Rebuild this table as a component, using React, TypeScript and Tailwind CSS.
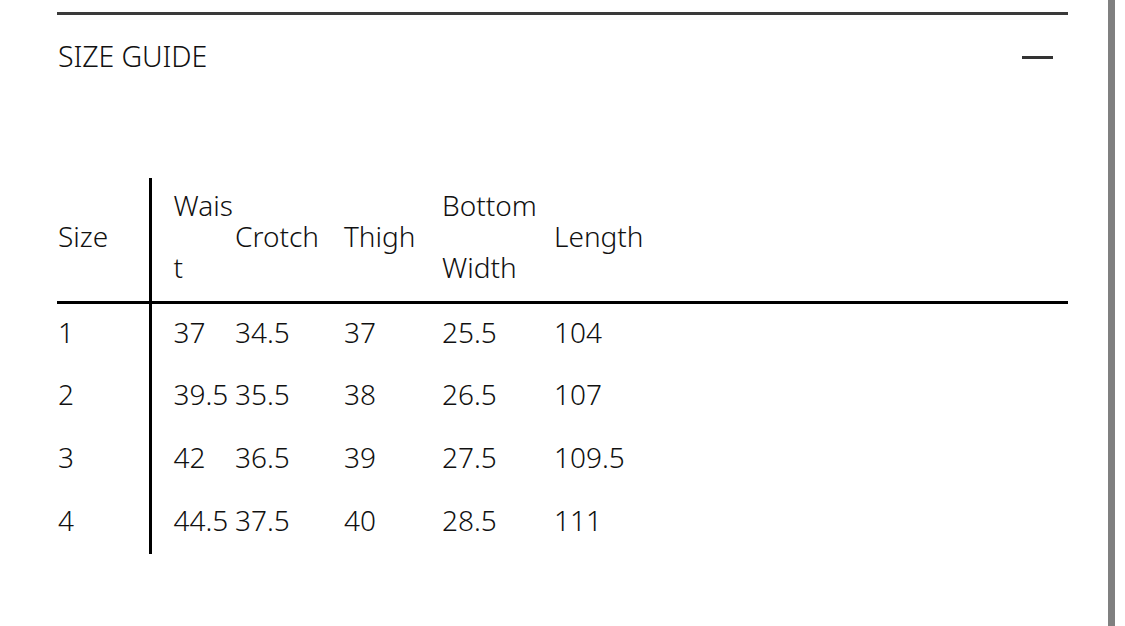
import React from 'react';

interface SizeRow {
  size: string;
  waist: string;
  crotch: string;
  thigh: string;
  bottom: string;
  length: string;
}

const rows: SizeRow[] = [
  { size: '1', waist: '37', crotch: '34.5', thigh: '37', bottom: '25.5', length: '104' },
  { size: '2', waist: '39.5', crotch: '35.5', thigh: '38', bottom: '26.5', length: '107' },
  { size: '3', waist: '42', crotch: '36.5', thigh: '39', bottom: '27.5', length: '109.5' },
  { size: '4', waist: '44.5', crotch: '37.5', thigh: '40', bottom: '28.5', length: '111' },
];

const App: React.FC = () => {
  return (
    <div
      className="relative h-[626px] w-full overflow-hidden bg-white font-[350] text-[#111]"
      style={{ fontFamily: '"Noto Sans", "Open Sans", sans-serif' }}
    >
      <div className="mx-[57px] pt-3">
        {/* 상단 구분선 */}
        <div className="h-[3px] bg-[#3a3a3a]" />

        {/* 헤더 */}
        <div className="flex h-[84px] items-center justify-between">
          <h2 className="pl-px pb-[2px] text-[28.5px] leading-none tracking-[-0.1px]">SIZE GUIDE</h2>
          <span className="mr-[15px] block h-[3px] w-[31px] bg-[#333]" />
        </div>

        {/* 사이즈 표 */}
        <table className="mt-[79px] w-full table-fixed border-collapse text-left text-[28px] leading-[31px]">
          <colgroup>
            <col className="w-[93px]" />
            <col className="w-[81px]" />
            <col className="w-[109px]" />
            <col className="w-[98px]" />
            <col className="w-[112px]" />
            <col />
          </colgroup>
          <thead>
            <tr className="h-[124px] border-b-[3px] border-black">
              <th className="border-r-[3px] border-black pl-px pb-[6px] font-[350]">Size</th>
              <th className="pl-[22px] pb-[6px] font-[350]">
                Wais
                <br />
                <span className="block pt-[31px]">t</span>
              </th>
              <th className="pl-[4px] pb-[6px] font-[350]">Crotch</th>
              <th className="pl-[4px] pb-[6px] font-[350]">Thigh</th>
              <th className="pl-[4px] pb-[6px] font-[350]">
                Bottom
                <br />
                <span className="block pt-[31px]">Width</span>
              </th>
              <th className="pl-[4px] pb-[6px] font-[350]">Length</th>
            </tr>
          </thead>
          <tbody>
            {rows.map((row) => (
              <tr key={row.size} className="h-[63px]">
                <td className="border-r-[3px] border-black pl-px pb-[4px]">{row.size}</td>
                <td className="pl-[22px] pb-[4px]">{row.waist}</td>
                <td className="pl-[4px] pb-[4px]">{row.crotch}</td>
                <td className="pl-[4px] pb-[4px]">{row.thigh}</td>
                <td className="pl-[4px] pb-[4px]">{row.bottom}</td>
                <td className="pl-[4px] pb-[4px]">{row.length}</td>
              </tr>
            ))}
          </tbody>
        </table>
      </div>

      {/* 스크롤바 */}
      <div className="absolute top-0 bottom-0 left-[1108px] w-[7px] bg-[#808080]" />
    </div>
  );
};

export default App;
